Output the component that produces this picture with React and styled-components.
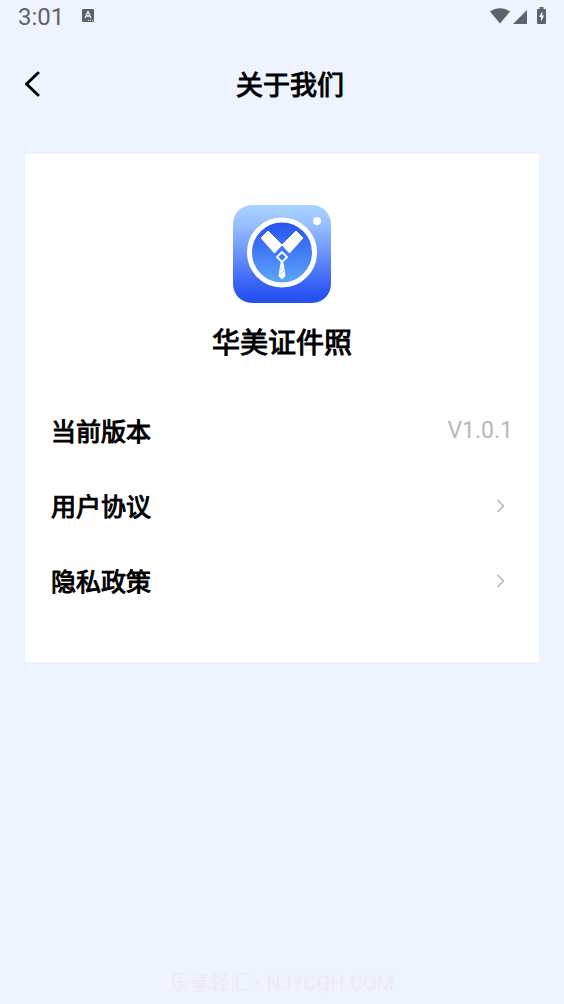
import React from "react";
import styled, { createGlobalStyle } from "styled-components";

const GlobalStyle = createGlobalStyle`
  * {
    box-sizing: border-box;
  }
  body {
    margin: 0;
    background-color: #edf4ff;
    font-family: Roboto, "Noto Sans CJK SC", sans-serif;
    color: #000;
  }
`;
const Page = styled.div`
  min-height: 100vh;
  display: flex;
  flex-direction: column;
`;
const StatusBar = styled.div`
  height: 32px;
  padding: 0 18px 2px;
  display: flex;
  align-items: center;
  justify-content: space-between;
  color: #5f6368;
`;
const StatusLeft = styled.div`
  display: flex;
  align-items: center;
  gap: 18px;
`;
const StatusRight = styled.div`
  display: flex;
  align-items: flex-end;
  gap: 3px;
`;
const Time = styled.span`
  font-size: 24px;
  line-height: 32px;
  padding-top: 4px;
`;
const Battery = styled.span`
  display: flex;
  margin-left: 7px;
`;
const Header = styled.header`
  height: 104px;
  padding: 0 16px 0 24px;
  display: grid;
  grid-template-columns: 32px 1fr 24px;
  align-items: center;
`;
const BackButton = styled.button`
  width: 32px;
  height: 32px;
  padding: 0;
  display: flex;
  align-items: center;
  border: none;
  background: none;
  color: inherit;
  cursor: pointer;
`;
const Title = styled.h1`
  margin: 0;
  padding-top: 4px;
  font-size: 27px;
  line-height: 40px;
  font-weight: 400;
  -webkit-text-stroke: 1px #000;
  text-align: center;
`;
const Card = styled.main`
  margin: 18px 25px 0;
  padding: 51px 26px 44px;
  background-color: #fff;
`;
const Brand = styled.div`
  display: flex;
  flex-direction: column;
  align-items: center;
  gap: 21px;
  margin-bottom: 29px;
`;
const Name = styled.h2`
  margin: 0;
  font-size: 28px;
  line-height: 40px;
  font-weight: 400;
  -webkit-text-stroke: 1px #000;
`;
const List = styled.ul`
  margin: 0;
  padding: 0;
  list-style: none;
`;
const Row = styled.li`
  height: 75px;
  display: flex;
  align-items: center;
  justify-content: space-between;
`;
const RowLink = styled.a`
  flex: 1;
  display: flex;
  align-items: center;
  justify-content: space-between;
  padding-right: 8px;
  color: inherit;
  text-decoration: none;
`;
const Label = styled.span`
  padding-top: 4px;
  font-size: 25px;
  line-height: 40px;
  -webkit-text-stroke: 1px #000;
`;
const Version = styled.span`
  font-size: 23px;
  line-height: 40px;
  color: #b8b8b8;
`;
const Footer = styled.footer`
  margin-top: auto;
  padding-bottom: 5px;
  font-size: 20px;
  line-height: 32px;
  text-align: center;
  color: #f3e6fb;
`;

const KeyboardIcon = () => (
  <svg width="12" height="13" viewBox="0 0 12 13" aria-hidden="true">
    <rect width="12" height="13" rx="1" fill="currentColor" />
    <path d="M3.2 9 5.6 3h.8L8.8 9M4.2 7h3.6" fill="none" stroke="#edf4ff" strokeWidth="1.3" />
    <path d="M6 11.3h1M8 11.3h1M10 11.3h1" stroke="#edf4ff" />
  </svg>
);

const WifiIcon = () => (
  <svg width="20" height="16" viewBox="0 0 20 16" aria-hidden="true">
    <path d="M0 3.6C6 -.9 14 -.9 20 3.6L10 15.6Z" fill="currentColor" />
  </svg>
);

const SignalIcon = () => (
  <svg width="14" height="14" viewBox="0 0 14 14" aria-hidden="true">
    <path d="M14 0v14H0Z" fill="currentColor" />
  </svg>
);

const BatteryIcon = () => (
  <svg width="9" height="17" viewBox="0 0 9 17" aria-hidden="true">
    <path d="M2.5 0h4v2H8q1 0 1 1v13q0 1-1 1H1q-1 0-1-1V3q0-1 1-1h1.500Z" fill="currentColor" />
    <path d="M5.300 4.500 2 10h2v4.500L7.200 8.500H5.300Z" fill="#edf4ff" />
  </svg>
);

const BackIcon = () => (
  <svg width="16" height="26" viewBox="0 0 16 26" aria-hidden="true">
    <path
      d="M14 2 2.500 13 14 24"
      fill="none"
      stroke="currentColor"
      strokeWidth="3"
      strokeLinecap="round"
      strokeLinejoin="round"
    />
  </svg>
);

const ArrowIcon = () => (
  <svg width="9" height="14" viewBox="0 0 9 14" aria-hidden="true">
    <path d="M1.500 1 7.500 7l-6 6" fill="none" stroke="#b8b8b8" strokeWidth="1.600" />
  </svg>
);

const Logo = () => (
  <svg width="98" height="98" viewBox="0 0 98 98" role="img" aria-label="华美证件照">
    <defs>
      <linearGradient id="tile" x1="0" y1="0" x2="0" y2="1">
        <stop offset="0" stopColor="#a9d3ff" />
        <stop offset=".2" stopColor="#97c0fe" />
        <stop offset=".9" stopColor="#2b56f2" />
        <stop offset="1" stopColor="#254ff0" />
      </linearGradient>
      <linearGradient id="lens" x1="0" y1="0" x2="0" y2="1">
        <stop offset="0" stopColor="#244ff0" />
        <stop offset="1" stopColor="#61a9fb" />
      </linearGradient>
    </defs>
    <rect width="98" height="98" rx="19" fill="url(#tile)" />
    <circle cx="49" cy="47.500" r="32.500" fill="url(#lens)" stroke="#fff" strokeWidth="5" />
    <circle cx="84" cy="16" r="4" fill="#fff" />
    <path
      d="M35 26 49 40 41.500 48 28 33Z M63 26 49 40 56.500 48 70 33Z"
      fill="#fff"
      stroke="#fff"
      strokeLinejoin="round"
    />
    <path d="M49 43 56 51.500 49 58.500 42 51.500Z" fill="#3f78f5" />
    <path
      d="M49 47 54 52 49 57 44 52Z"
      fill="none"
      stroke="#fff"
      strokeWidth="1.800"
      strokeLinejoin="round"
    />
    <path d="M47.600 57.500h2.800L52.500 71 49 74.500 45.500 71Z" fill="#fff" />
    <path d="M47.500 65 50.500 62M47 69.500 51 66" stroke="#75adf9" strokeWidth=".7" />
  </svg>
);

const links = [
  { label: "用户协议", href: "#agreement" },
  { label: "隐私政策", href: "#privacy" },
];

const App = () => {
  return (
    <Page>
      <GlobalStyle />
      <StatusBar>
        <StatusLeft>
          <Time>3:01</Time>
          <KeyboardIcon />
        </StatusLeft>
        <StatusRight>
          <WifiIcon />
          <SignalIcon />
          <Battery>
            <BatteryIcon />
          </Battery>
        </StatusRight>
      </StatusBar>
      <Header>
        <BackButton aria-label="返回">
          <BackIcon />
        </BackButton>
        <Title>关于我们</Title>
      </Header>
      <Card>
        <Brand>
          <Logo />
          <Name>华美证件照</Name>
        </Brand>
        <List>
          <Row>
            <Label>当前版本</Label>
            <Version>V1.0.1</Version>
          </Row>
          {links.map((link) => (
            <Row key={link.href}>
              <RowLink href={link.href}>
                <Label>{link.label}</Label>
                <ArrowIcon />
              </RowLink>
            </Row>
          ))}
        </List>
      </Card>
      <Footer>乐享轻汇 • NJYCQH.COM</Footer>
    </Page>
  );
};

export default App;
